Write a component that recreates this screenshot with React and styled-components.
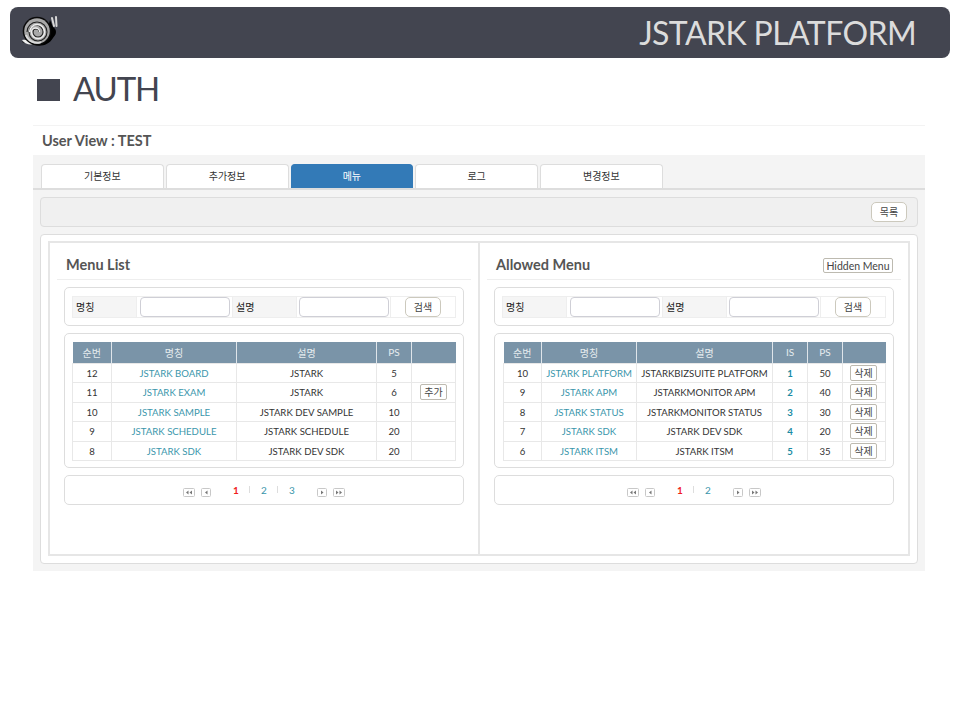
import React from "react";
import styled, { createGlobalStyle } from "styled-components";

const FONT = `"Lato", "Noto Sans CJK KR", sans-serif`;
const Global = createGlobalStyle`
  html, body { margin: 0; padding: 0; background: #fff; }
  body { font-family: ${FONT}; color: #333; }
  * { box-sizing: border-box; }
`;
const Page = styled.div`width: 960px; height: 720px; overflow: hidden; padding-top: 7px;`;
const Banner = styled.header`
  margin: 0 10px; height: 51px; border-radius: 8px; background: #434550;
  display: flex; justify-content: space-between; padding: 7px 34px 0 11px;
`;
const BannerTitle = styled.div`
  font-size: 32px; line-height: 38px; color: #dcdcdc; font-weight: 400; letter-spacing: -0.6px;
`;
const Heading = styled.h1`
  margin: 0; height: 67px; padding: 0 0 8px 37px; display: flex; align-items: center; gap: 13px;
  font-size: 33px; line-height: 48px; font-weight: 400; color: #434550; letter-spacing: -1.2px;
  &::before { content: ""; width: 23px; height: 22px; margin-top: 4px; background: #434550; }
`;
const Shot = styled.section`width: 892px; margin-left: 33px; border-top: 1px solid #f3f3f3;`;
const ShotTitle = styled.div`
  height: 29px; padding-left: 9px; font-size: 14.5px; line-height: 30px; font-weight: 700; color: #555;
`;
const Stage = styled.div`height: 416px; background: #f4f4f4; padding-top: 9px;`;
const TabRow = styled.div`display: flex; gap: 2px; padding-left: 8px; border-bottom: 2px solid #ddd; height: 26px;`;
const Tab = styled.div`
  width: 122.75px; height: 24px; border: 1px solid ${p => (p.$on ? "#337ab7" : "#ddd")}; border-bottom: 0;
  border-radius: 4px 4px 0 0; background: ${p => (p.$on ? "#337ab7" : "#fff")};
  color: ${p => (p.$on ? "#fff" : "#333")}; font-size: 10px; line-height: 23px; text-align: center;
`;
const Toolbar = styled.div`
  margin: 7px 7px 0; height: 30px; border: 1px solid #ddd; border-radius: 4px; background: #f0f0f0;
  display: flex; justify-content: flex-end; align-items: center; padding: 0 10px 1px 0;
`;
const RoundButton = styled.button`
  width: 36px; height: 20px; padding: 0; background: #fff; border: 1px solid #ccc9bd; border-radius: 5px;
  font: 10px/16px ${FONT}; color: #444;
`;
const Outer = styled.div`
  margin: 7px 7px 0; height: 330px; background: #fff; border: 1px solid #ddd; border-radius: 4px; padding: 6px 7px;
`;
const Inner = styled.div`
  height: 315px; border: 2px solid #e6e6e6; display: grid; grid-template-columns: 428px 2px 428px;
`;
const Divider = styled.div`background: #e6e6e6;`;
const Column = styled.div`display: flex; flex-direction: column;`;
const ColumnHead = styled.div`
  margin: 0 7px; height: 37px; border-bottom: 1px solid #eee; padding: 8px 8px 0 9px;
  display: flex; justify-content: space-between; align-items: center;
`;
const ColumnTitle = styled.div`font-size: 14.5px; font-weight: 700; color: #555; line-height: 20px;`;
const SmallButton = styled.button`
  height: ${p => p.$h || 16}px; width: ${p => p.$w || 27}px; padding: 0; background: #fff;
  border: 1px solid #bdbab0; border-radius: 2px; color: #444; display: block;
  font: ${p => p.$fs || 10}px/14px ${FONT};
`;
const Box = styled.div`
  margin: 7px 14px 0; height: ${p => p.$h}px; border: 1px solid #ddd; border-radius: 5px;
  padding: 8px 0 0 ${p => p.$inset}px;
`;
const SearchGrid = styled.div`
  width: 384px; height: 22px; border: 1px solid #eee; display: grid; align-items: stretch;
  grid-template-columns: 64px 96px 64px 94px 64px;
`;
const SearchLabel = styled.div`
  background: #f5f5f5; font-size: 10px; line-height: 20px; padding-left: 3px; color: #222;
  border-right: 1px solid #eee;
`;
const SearchCell = styled.div`
  display: flex; align-items: center; justify-content: ${p => (p.$start ? "flex-start" : "center")};
  padding-left: ${p => (p.$start ? 14 : 0)}px; border-right: ${p => (p.$start ? 0 : "1px solid #eee")};
`;
const SearchInput = styled.input`
  width: 90px; height: 20px; border: 1px solid #cfcfd6; border-radius: 4px; background: #fff; padding: 0;
`;
const Table = styled.table`
  width: ${p => p.$w}px; table-layout: fixed; border-collapse: collapse; font-size: 9.6px; color: #333;
`;
const Th = styled.th`
  height: 21px; padding: 0; background: #7a94a8; color: #e6ecef; font-weight: 400; text-align: center;
  font-size: 10px; border-left: 1px solid #dfe5ea; &:first-child { border-left: 0; }
`;
const Td = styled.td`
  height: 19.5px; padding: 1px 0 0; text-align: center; border: 1px solid #e8e8e8; white-space: nowrap;
  color: ${p => (p.$strong ? "#1b8ba3" : p.$link ? "#3a96ab" : "#333")}; font-weight: ${p => (p.$strong ? 700 : 400)};
`;
const ButtonSlot = styled.div`
  display: flex; justify-content: center; margin-top: -1px; padding-right: ${p => (p.$nudge ? 1 : 0)}px;
`;
const PagerBox = styled.div`
  margin: 7px 14px 0; height: 30px; border: 1px solid #ddd; border-radius: 5px;
  display: flex; justify-content: center; align-items: center; padding-top: 1px;
`;
const PagerIcon = styled.svg`display: block; margin-top: 3px; margin-right: ${p => p.$mr || 0}px;`;
const PagerNumbers = styled.div`display: flex; align-items: center; margin: 0 22px 2px;`;
const PagerNumber = styled.span`
  font-size: 10px; line-height: 14px; width: 6px; text-align: center;
  color: ${p => (p.$on ? "#f01c1c" : "#3a96ab")}; font-weight: ${p => (p.$on ? 700 : 400)};
`;
const PagerSep = styled.i`
  display: block; width: 1px; height: 7px; background: #ddd; margin: 0 11px 1px 10px;
`;

const Snail = () => (
  <svg width="38" height="33" viewBox="0 0 38 33">
    <path d="M1 28c4 2 8 1 12 3 7 2 15 0 19-7 1-2 3-3 3-6 0-3-2-4-3-5L29 6l-5 20L5 25z" fill="#000" />
    <path d="M1 26c3-.5 6 0 9 1.500 2 1 3 2.500 1 3-3 .6-8-1-10-4.500z" fill="#eee" />
    <path d="M31 4l2 8M35 3l.5 9" stroke="#d8d8d8" strokeWidth="2" strokeLinecap="round" />
    <circle cx="16" cy="17" r="14.300" fill="#0a0a0a" />
    <circle cx="16" cy="17" r="12.800" fill="#a8a8a8" />
    <path d="M5 21A11.500 11.500 0 0 0 20 28" stroke="#dadada" strokeWidth="2" fill="none" />
    <path d="M6 18A10 10 0 0 1 26 18A9 9 0 0 1 8 18A7 7 0 0 1 22 18A5 5 0 0 1 12 18A3 3 0 0 1 18 18" stroke="#222" strokeWidth="1.100" fill="none" />
    <path d="M8.600 18A7.500 7.500 0 0 1 23.600 18A6.500 6.500 0 0 1 10.500 18A4 4 0 0 1 18.500 18" stroke="#eee" strokeWidth="1.400" fill="none" />
  </svg>
);

const NavIcon = ({ dir, double, mr }) => {
  const w = double ? 12 : 10;
  const pts = double ? [3, 6.500] : [4];
  return (
    <PagerIcon width={w} height="9" viewBox={`0 0 ${w} 9`} $mr={mr}>
      <rect x=".5" y=".5" width={w - 1} height="8" rx="1" fill="#fff" stroke="#c8c8c8" />
      {pts.map(x => (
        <path key={x} d={dir < 0 ? `M${x} 4.500l2.500-2v4z` : `M${x + 2.5} 4.500l-2.500-2v4z`} fill="#777" />
      ))}
    </PagerIcon>
  );
};

const Pager = ({ pages }) => (
  <PagerBox>
    <NavIcon dir={-1} double mr={6} />
    <NavIcon dir={-1} />
    <PagerNumbers>
      {pages.map((n, i) => (
        <React.Fragment key={n}>
          {i > 0 && <PagerSep />}
          <PagerNumber $on={i === 0}>{n}</PagerNumber>
        </React.Fragment>
      ))}
    </PagerNumbers>
    <NavIcon dir={1} mr={6} />
    <NavIcon dir={1} double />
  </PagerBox>
);

const Search = () => (
  <Box $h={39} $inset={7}>
    <SearchGrid>
      <SearchLabel>명칭</SearchLabel>
      <SearchCell><SearchInput /></SearchCell>
      <SearchLabel>설명</SearchLabel>
      <SearchCell><SearchInput /></SearchCell>
      <SearchCell $start><RoundButton>검색</RoundButton></SearchCell>
    </SearchGrid>
  </Box>
);

const menu = [
  [12, "JSTARK BOARD", "JSTARK", 5],
  [11, "JSTARK EXAM", "JSTARK", 6],
  [10, "JSTARK SAMPLE", "JSTARK DEV SAMPLE", 10],
  [9, "JSTARK SCHEDULE", "JSTARK SCHEDULE", 20],
  [8, "JSTARK SDK", "JSTARK DEV SDK", 20],
];
const allowed = [
  [10, "JSTARK PLATFORM", "JSTARKBIZSUITE PLATFORM", 1, 50],
  [9, "JSTARK APM", "JSTARKMONITOR APM", 2, 40],
  [8, "JSTARK STATUS", "JSTARKMONITOR STATUS", 3, 30],
  [7, "JSTARK SDK", "JSTARK DEV SDK", 4, 20],
  [6, "JSTARK ITSM", "JSTARK ITSM", 5, 35],
];

const Cols = ({ widths }) => <colgroup>{widths.map((w, i) => <col key={i} width={w} />)}</colgroup>;

export default function App() {
  return (
    <Page>
      <Global />
      <Banner><Snail /><BannerTitle>JSTARK PLATFORM</BannerTitle></Banner>
      <Heading>AUTH</Heading>
      <Shot>
        <ShotTitle>User View : TEST</ShotTitle>
        <Stage>
          <TabRow>
            {["기본정보", "추가정보", "메뉴", "로그", "변경정보"].map((t, i) => <Tab key={t} $on={i === 2}>{t}</Tab>)}
          </TabRow>
          <Toolbar><RoundButton>목록</RoundButton></Toolbar>
          <Outer>
            <Inner>
              <Column>
                <ColumnHead><ColumnTitle>Menu List</ColumnTitle></ColumnHead>
                <Search />
                <Box $h={135} $inset={7}>
                  <Table $w={383}>
                    <Cols widths={[39, 125, 140, 35, 44]} />
                    <thead><tr><Th>순번</Th><Th>명칭</Th><Th>설명</Th><Th>PS</Th><Th /></tr></thead>
                    <tbody>
                      {menu.map((r, i) => (
                        <tr key={r[0]}>
                          <Td>{r[0]}</Td><Td $link>{r[1]}</Td><Td>{r[2]}</Td><Td>{r[3]}</Td>
                          <Td>{i === 1 && <ButtonSlot><SmallButton>추가</SmallButton></ButtonSlot>}</Td>
                        </tr>
                      ))}
                    </tbody>
                  </Table>
                </Box>
                <Pager pages={[1, 2, 3]} />
              </Column>
              <Divider />
              <Column>
                <ColumnHead>
                  <ColumnTitle>Allowed Menu</ColumnTitle>
                  <SmallButton $w={70} $h={15} $fs={10.500}>Hidden Menu</SmallButton>
                </ColumnHead>
                <Search />
                <Box $h={135} $inset={8}>
                  <Table $w={382}>
                    <Cols widths={[38, 95, 136, 35, 35, 43]} />
                    <thead><tr><Th>순번</Th><Th>명칭</Th><Th>설명</Th><Th>IS</Th><Th>PS</Th><Th /></tr></thead>
                    <tbody>
                      {allowed.map(r => (
                        <tr key={r[0]}>
                          <Td>{r[0]}</Td><Td $link>{r[1]}</Td><Td>{r[2]}</Td><Td $strong>{r[3]}</Td><Td>{r[4]}</Td>
                          <Td><ButtonSlot $nudge><SmallButton>삭제</SmallButton></ButtonSlot></Td>
                        </tr>
                      ))}
                    </tbody>
                  </Table>
                </Box>
                <Pager pages={[1, 2]} />
              </Column>
            </Inner>
          </Outer>
        </Stage>
      </Shot>
    </Page>
  );
}
